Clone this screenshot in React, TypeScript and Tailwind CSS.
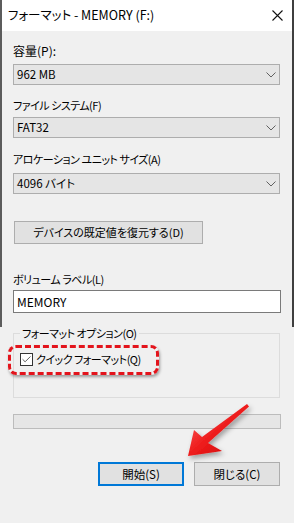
import { Check } from "lucide-react";

const font = {
  fontFamily: '"Noto Sans CJK JP", "Noto Sans", sans-serif',
  fontFeatureSettings: '"palt"',
};

// kana-heavy labels are set a touch smaller/tighter to match Yu Gothic UI widths
const Label = ({ text, mt, kana = true }: { text: string; mt: string; kana?: boolean }) => (
  <div
    className={`h-[16px] leading-[16px] ${mt} ${kana ? "text-[11px] tracking-[-0.5px]" : "text-[12px]"}`}
  >
    {text}
  </div>
);

const Select = ({ value, mt }: { value: string; mt: string }) => (
  <div
    className={`h-[21px] ${mt} flex items-center justify-between border border-[#adadad] bg-[#e5e5e5] pl-[3px] pr-[3px]`}
  >
    <span className="leading-[19px] text-[11.5px]">{value}</span>
    <svg width="10" height="6" viewBox="0 0 10 6" fill="none">
      <path d="M0.5 0.5 L5 5 L9.5 0.5" stroke="#606060" strokeWidth="1" />
    </svg>
  </div>
);

export default function App() {
  return (
    <div
      className="relative w-[294px] h-[523px] overflow-hidden bg-[#f0f0f0] text-[12px] text-black"
      style={font}
    >
      {/* upper part of the dialog, window edge still visible */}
      <div className="border-l-2 border-r-2 border-l-[#5c5c5c] border-r-[#3f3f3f] pb-[14px]">
        <div className="h-[31px] bg-white flex items-center justify-between pl-[6px] pr-[9px]">
          <span className="text-[12.5px]">フォーマット - MEMORY (F:)</span>
          <svg width="11" height="11" viewBox="0 0 11 11">
            <path d="M0.5 0.5 L10.5 10.5 M10.5 0.5 L0.5 10.5" stroke="#111" strokeWidth="1.1" />
          </svg>
        </div>

        <div className="pl-[11px] pr-[12px] flex flex-col">
          <Label text="容量(P):" mt="mt-[12px]" kana={false} />
          <Select value="962 MB" mt="mt-[5px]" />
          <Label text="ファイル システム(F)" mt="mt-[12px]" />
          <Select value="FAT32" mt="mt-[4px]" />
          <Label text="アロケーション ユニット サイズ(A)" mt="mt-[13px]" />
          <Select value="4096 バイト" mt="mt-[6px]" />

          <button className="mt-[27px] ml-[1px] w-[189px] h-[23px] border border-[#adadad] bg-[#e1e1e1] leading-[21px] text-[11px]">
            デバイスの既定値を復元する(D)
          </button>

          <Label text="ボリューム ラベル(L)" mt="mt-[27px]" />
          <div className="mt-[3px] h-[23px] border border-[#7a7a7a] bg-white pl-[3px] leading-[21px] mr-[-1px]">
            MEMORY
          </div>
        </div>
      </div>

      {/* lower part */}
      <div className="pl-[13px] pr-[14px] flex flex-col">
        <fieldset className="border border-[#dcdcdc] pl-[6px] pt-[13px] pb-[31px]">
          <legend className="px-[2px] leading-[12px] text-[11px] tracking-[-0.5px]">
            フォーマット オプション(O)
          </legend>
          <div className="relative flex items-center h-[14px]">
            <div className="w-[13px] h-[13px] border border-[#333] bg-white flex items-center justify-center">
              <Check size={11} strokeWidth={1.6} className="text-[#222]" />
            </div>
            <span className="ml-[3px] leading-[14px] text-[11px] tracking-[-0.5px]">
              クイック フォーマット(Q)
            </span>
            <div className="absolute left-[-12px] top-[-7px] w-[151px] h-[30px] rounded-[8px] border-[3px] border-dashed border-[#e3141c] shadow-[1px_2px_3px_rgba(0,0,0,0.35)]" />
          </div>
        </fieldset>

        <div className="mt-[16px] h-[15px] mr-[-1px] border border-[#bcbcbc] bg-[#e6e6e6]" />

        <div className="mt-[33px] flex justify-end gap-[10px]">
          <button className="w-[86px] h-[24px] border-2 border-[#0078d7] bg-[#e1e1e1] leading-[20px] text-[11.5px]">
            開始(S)
          </button>
          <button className="w-[86px] h-[24px] border border-[#adadad] bg-[#e1e1e1] leading-[22px] text-[11.5px]">
            閉じる(C)
          </button>
        </div>
      </div>

      {/* red pointer arrow */}
      <svg
        className="absolute left-0 top-0 pointer-events-none"
        width="294"
        height="523"
        viewBox="0 0 294 523"
      >
        <defs>
          <linearGradient id="ar" x1="0" y1="0" x2="1" y2="1">
            <stop offset="0" stopColor="#ff6a6a" />
            <stop offset="0.5" stopColor="#ee1c1c" />
            <stop offset="1" stopColor="#c40000" />
          </linearGradient>
          <filter id="sh" x="-20%" y="-20%" width="140%" height="140%">
            <feDropShadow dx="2" dy="3" stdDeviation="2.5" floodColor="#000" floodOpacity="0.35" />
          </filter>
        </defs>
        <polygon
          points="188,456 194,430 202,437 247,404 249,406.5 208,443 222,451"
          fill="url(#ar)"
          filter="url(#sh)"
        />
      </svg>
    </div>
  );
}
